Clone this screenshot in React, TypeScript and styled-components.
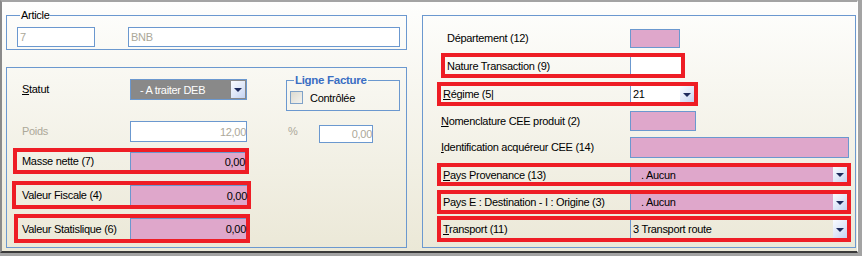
import React from 'react';
import styled, { createGlobalStyle } from 'styled-components';

const BLUE = '#6b98cf';
const RED = '#ee1d25';
const PINK = '#dfa7cb';

const Global = createGlobalStyle`
  html, body { margin: 0; padding: 0; background: #a3a3a3; }
  body {
    width: 862px; height: 256px; overflow: hidden;
    font-family: "Liberation Sans", Arial, sans-serif; font-size: 11px; color: #000;
    letter-spacing: -0.3px;
  }
`;

const Window = styled.div`
  box-sizing: border-box;
  width: 858px;
  height: 253px;
  border-top: 2px solid #a3a3a3;
  border-left: 2px solid #8a8a8a;
  border-right: 1px solid #ffffff;
  border-bottom: 2px solid #3a3a3a;
  background: linear-gradient(#fefefd, #ebe8d7);
  display: flex;
  align-items: flex-start;
  gap: 15px;
  padding: 7px 0 0 4px;
`;

const LeftColumn = styled.div`
  width: 401px;
  display: flex;
  flex-direction: column;
`;

const Group = styled.fieldset`
  margin: 0;
  padding: 5px 0 2px 10px;
  border: 1px solid ${BLUE};
  min-width: 0;
  display: flex;
  gap: 33px;
`;

const Legend = styled.legend<{ $bold?: boolean }>`
  padding: 0 1px;
  margin-left: ${p => (p.$bold ? 4 : 3)}px;
  font-size: ${p => (p.$bold ? '11.5px' : '11px')};
  line-height: 13px;
  font-weight: ${p => (p.$bold ? 700 : 400)};
  color: ${p => (p.$bold ? '#3a6ec3' : '#000')};
`;

const TextBox = styled.div<{ $w: number; $h?: number; $align?: string; $bg?: string; $color?: string; $mt?: number }>`
  box-sizing: border-box;
  width: ${p => p.$w}px;
  height: ${p => p.$h ?? 20}px;
  margin-top: ${p => p.$mt ?? 0}px;
  border: 1px solid ${BLUE};
  background: ${p => p.$bg ?? '#ffffff'};
  color: ${p => p.$color ?? '#aca899'};
  display: flex;
  align-items: center;
  justify-content: ${p => (p.$align === 'right' ? 'flex-end' : 'flex-start')};
  padding: 0 ${p => (p.$align === 'right' ? 0 : 2)}px;
  flex: none;
`;

const Panel = styled.div<{ $w: number; $h: number; $mt: number; $pl: number }>`
  box-sizing: border-box;
  width: ${p => p.$w}px;
  height: ${p => p.$h}px;
  margin-top: ${p => p.$mt}px;
  border: 1px solid ${BLUE};
  display: flex;
  flex-direction: column;
  padding: ${p => (p.$mt > 10 ? 11 : 13)}px 0 0 ${p => p.$pl}px;
`;

const Row = styled.div<{ $ml?: number; $mt?: number }>`
  display: flex;
  align-items: flex-start;
  margin-left: ${p => p.$ml ?? 0}px;
  margin-top: ${p => p.$mt ?? 0}px;
`;

const Label = styled.div<{ $w: number; $pad?: number; $h?: number; $muted?: boolean }>`
  box-sizing: border-box;
  flex: none;
  width: ${p => p.$w}px;
  height: ${p => p.$h ?? 20}px;
  padding-left: ${p => p.$pad ?? 0}px;
  padding-bottom: 1px;
  display: flex;
  align-items: center;
  white-space: pre;
  color: ${p => (p.$muted ? '#aca899' : '#000')};
  u { text-decoration: underline; text-underline-offset: 1px; }
`;

const RedBox = styled.div<{ $ml: number; $mt: number; $w: number; $h: number }>`
  box-sizing: border-box;
  width: ${p => p.$w}px;
  height: ${p => p.$h}px;
  margin-left: ${p => p.$ml}px;
  margin-top: ${p => p.$mt}px;
  border: 4px solid ${RED};
  display: flex;
  align-items: stretch;
`;

const InBoxLabel = styled.div<{ $w: number; $pad: number }>`
  box-sizing: border-box;
  flex: none;
  width: ${p => p.$w}px;
  padding-left: ${p => p.$pad}px;
  display: flex;
  align-items: center;
  white-space: pre;
  u { text-decoration: underline; text-underline-offset: 1px; }
`;

const BoxField = styled.div<{ $bg: string; $align?: string; $pad?: number; $top?: boolean }>`
  box-sizing: border-box;
  flex: 1;
  display: flex;
  align-items: center;
  justify-content: ${p => (p.$align === 'right' ? 'flex-end' : 'flex-start')};
  background: ${p => p.$bg};
  border-left: 1px solid ${BLUE};
  border-top: ${p => (p.$top ? `1px solid ${BLUE}` : 'none')};
  padding-left: ${p => p.$pad ?? 2}px;
  white-space: pre;
`;

const FieldText = styled.span`
  flex: 1;
`;

const DropButton = styled.div<{ $inset?: boolean }>`
  flex: none;
  width: 14px;
  align-self: stretch;
  margin: ${p => (p.$inset ? '1px 1px 1px 0' : '0')};
  background: linear-gradient(135deg, #fafcff 0%, #dfe7f8 55%, #c3d2f1 100%);
  display: flex;
  align-items: center;
  justify-content: center;
  &::after {
    content: '';
    width: 0;
    height: 0;
    border-left: 4px solid transparent;
    border-right: 4px solid transparent;
    border-top: 4px solid #1d2a5c;
    margin-top: 1px;
  }
`;

const StatutCombo = styled.div`
  box-sizing: border-box;
  flex: none;
  width: 117px;
  height: 21px;
  border: 1px solid ${BLUE};
  background: #898989;
  color: #ffffff;
  display: flex;
  align-items: stretch;
  padding-left: 9px;
`;

const ComboText = styled.span`
  flex: 1;
  display: flex;
  align-items: center;
  white-space: pre;
`;

const FactureGroup = styled.fieldset`
  margin: -5px 0 0 39px;
  padding: 4px 0 6px 3px;
  width: 114px;
  box-sizing: border-box;
  border: 1px solid ${BLUE};
  min-width: 0;
  display: flex;
  align-items: center;
  gap: 7px;
`;

const CheckBox = styled.span`
  box-sizing: border-box;
  width: 13px;
  height: 13px;
  border: 1px solid #7fa2c8;
  background: linear-gradient(135deg, #dcdad0, #f4f3ee);
  flex: none;
`;

const RightPanel = styled(Panel)``;

export default function App() {
  return (
    <>
      <Global />
      <Window>
        <LeftColumn>
          <Group>
            <Legend>Article</Legend>
            <TextBox $w={78}>7</TextBox>
            <TextBox $w={272}>BNB</TextBox>
          </Group>

          <Panel $w={401} $h={181} $mt={17} $pl={0}>
            <Row $ml={15}>
              <Label $w={108} $h={21}><span><u>S</u>tatut</span></Label>
              <StatutCombo>
                <ComboText>- A traiter DEB</ComboText>
                <DropButton $inset />
              </StatutCombo>
              <FactureGroup>
                <Legend $bold>Ligne Facture</Legend>
                <CheckBox />
                <span>Contrôlée</span>
              </FactureGroup>
            </Row>

            <Row $ml={15} $mt={10}>
              <Label $w={108} $h={21} $muted>Poids</Label>
              <TextBox $w={117} $h={21} $align="right">12,00</TextBox>
              <Label $w={72} $h={21} $pad={41} $muted>%</Label>
              <TextBox $w={54} $h={18} $mt={4} $align="right">0,00</TextBox>
            </Row>

            <RedBox $ml={6} $mt={5} $w={236} $h={26}>
              <InBoxLabel $w={113} $pad={5}>Masse nette (7)</InBoxLabel>
              <BoxField $bg={PINK} $align="right" $top>0,00</BoxField>
            </RedBox>
            <RedBox $ml={5} $mt={7} $w={239} $h={28}>
              <InBoxLabel $w={114} $pad={6}>Valeur Fiscale (4)</InBoxLabel>
              <BoxField $bg={PINK} $align="right" $top>0,00</BoxField>
            </RedBox>
            <RedBox $ml={7} $mt={5} $w={236} $h={29}>
              <InBoxLabel $w={112} $pad={4}>Valeur Statislique (6)</InBoxLabel>
              <BoxField $bg={PINK} $align="right" $top>0,00</BoxField>
            </RedBox>
          </Panel>
        </LeftColumn>

        <RightPanel $w={434} $h={233} $mt={6} $pl={14}>
          <Row>
            <Label $w={193} $pad={10} $h={19}>Département (12)</Label>
            <TextBox $w={50} $h={19} $bg={PINK} />
          </Row>
          <RedBox $ml={4} $mt={5} $w={244} $h={25}>
            <InBoxLabel $w={185} $pad={2}>Nature Transaction (9)</InBoxLabel>
            <BoxField $bg="#ffffff" />
          </RedBox>
          <RedBox $ml={0} $mt={4} $w={261} $h={24}>
            <InBoxLabel $w={189} $pad={2}><span><u>R</u>égime (5|</span></InBoxLabel>
            <BoxField $bg="#ffffff">
              <FieldText>21</FieldText>
              <DropButton />
            </BoxField>
          </RedBox>
          <Row $ml={4} $mt={5}>
            <Label $w={189} $h={20}><span><u>N</u>omenclature CEE produit (2)</span></Label>
            <TextBox $w={66} $h={20} $bg={PINK} />
          </Row>
          <Row $ml={4} $mt={6}>
            <Label $w={189} $h={21}><span><u>I</u>dentification acquéreur CEE (14)</span></Label>
            <TextBox $w={219} $h={21} $bg={PINK} />
          </Row>
          <RedBox $ml={0} $mt={5} $w={414} $h={23}>
            <InBoxLabel $w={189} $pad={2}><span><u>P</u>ays Provenance (13)</span></InBoxLabel>
            <BoxField $bg={PINK} $pad={10}>
              <FieldText>. Aucun</FieldText>
              <DropButton />
            </BoxField>
          </RedBox>
          <RedBox $ml={0} $mt={4} $w={414} $h={24}>
            <InBoxLabel $w={189} $pad={2}>Pays E : Destination - I : Origine (3)</InBoxLabel>
            <BoxField $bg={PINK} $pad={10}>
              <FieldText>. Aucun</FieldText>
              <DropButton />
            </BoxField>
          </RedBox>
          <RedBox $ml={0} $mt={2} $w={414} $h={26}>
            <InBoxLabel $w={189} $pad={2}><span><u>T</u>ransport (11)</span></InBoxLabel>
            <BoxField $bg="transparent">
              <FieldText>3 Transport route</FieldText>
              <DropButton />
            </BoxField>
          </RedBox>
        </RightPanel>
      </Window>
    </>
  );
}
